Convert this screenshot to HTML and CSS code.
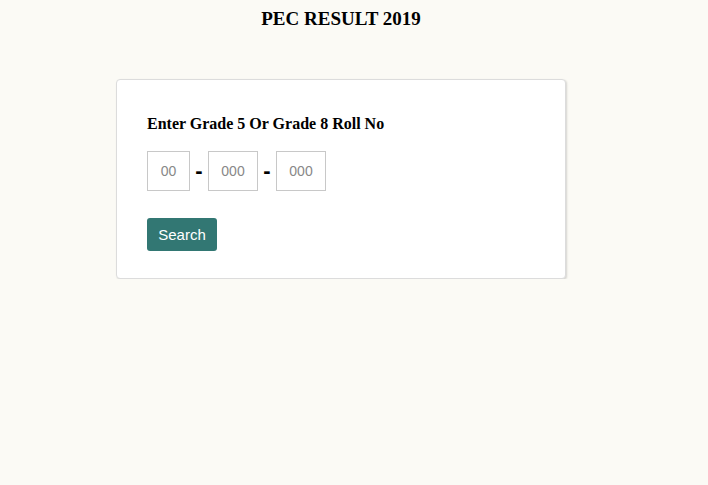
FILE: index.html
```html
<!DOCTYPE html>
<html lang="en">
<head>
    <meta charset="UTF-8">
    <meta name="viewport" content="width=device-width, initial-scale=1.0">
    <title>PEC Result 2019</title>
    <link rel="stylesheet" href="styles.css">
</head>
<body>
    <div class="wrapper">
        <!-- Header -->
        <h3 class="title">PEC RESULT 2019</h3>

        <!-- Roll No Form -->
        <div class="card">
            <h4 class="label">Enter Grade 5 Or Grade 8 Roll No</h4>
            <div class="roll-row">
                <input type="text" class="roll small" placeholder="00" maxlength="2">
                <span class="dash">-</span>
                <input type="text" class="roll" placeholder="000" maxlength="3">
                <span class="dash">-</span>
                <input type="text" class="roll" placeholder="000" maxlength="3">
            </div>
            <button class="search-btn">Search</button>
        </div>
    </div>
</body>
</html>
```

FILE: styles.css
```css
body {
    margin: 0;
    padding: 0;
    background: #fbfaf5;
    font-family: "Liberation Serif", "Times New Roman", serif;
    color: #000;
}

.wrapper {
    width: 682px;
    padding-top: 9px;
}

.title {
    margin: 0;
    text-align: center;
    font-size: 19px;
    font-weight: bold;
    line-height: 20px;
}

.card {
    width: 450px;
    box-sizing: border-box;
    margin: 50px auto 0;
    padding: 35px 30px 27px;
    background: #fff;
    border: 1px solid #dcdcdc;
    border-radius: 4px;
    box-shadow: 1px 1px 2px rgba(0, 0, 0, 0.15);
}

.label {
    margin: 0 0 18px;
    font-size: 16px;
    font-weight: bold;
    line-height: 18px;
}

.roll-row {
    display: flex;
    align-items: center;
}

.roll {
    width: 50px;
    height: 40px;
    box-sizing: border-box;
    border: 1px solid #c8c8c8;
    padding: 0;
    text-align: center;
    font-family: "Liberation Sans", Arial, sans-serif;
    font-size: 14px;
    color: #555;
    outline: none;
}

.roll.small {
    width: 43px;
}

.roll::placeholder {
    color: #888;
}

.dash {
    width: 18px;
    text-align: center;
    font-family: "Liberation Sans", Arial, sans-serif;
    font-size: 22px;
    font-weight: bold;
    line-height: 20px;
}

.search-btn {
    display: block;
    margin-top: 27px;
    width: 70px;
    height: 33px;
    padding: 0;
    border: none;
    border-radius: 3px;
    background: #327773;
    color: #fff;
    font-family: "Liberation Sans", Arial, sans-serif;
    font-size: 15px;
    cursor: pointer;
}
```
